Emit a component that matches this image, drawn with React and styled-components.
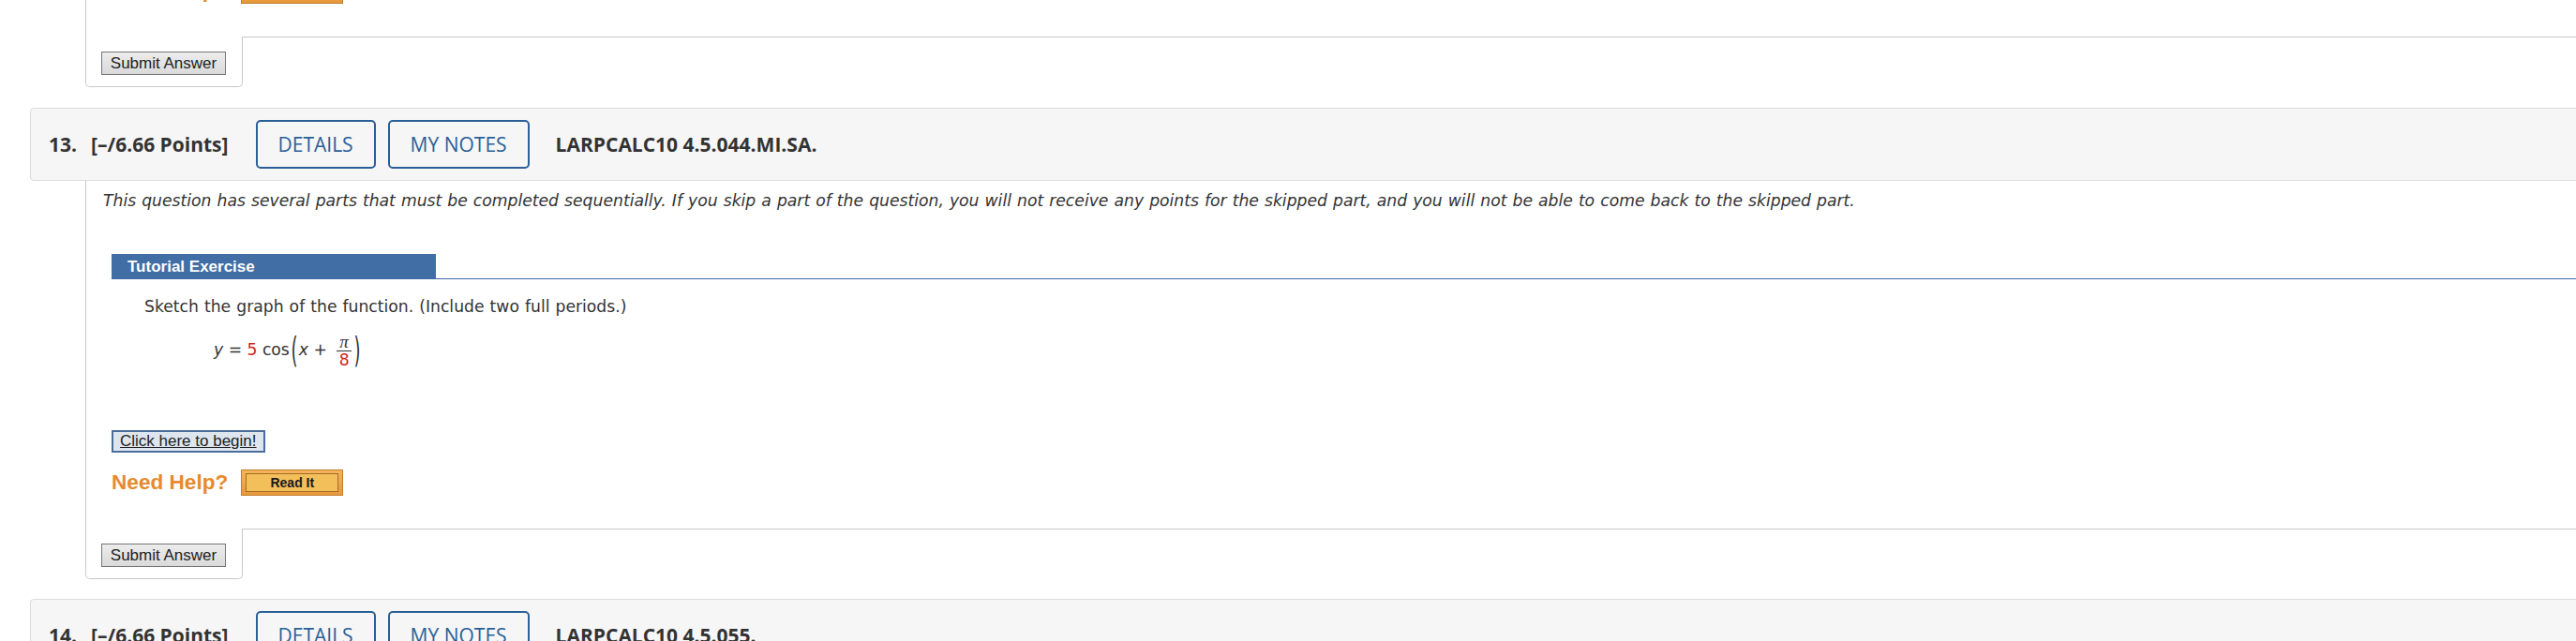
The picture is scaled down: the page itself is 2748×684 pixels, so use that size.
import React from 'react';
import styled, { createGlobalStyle } from 'styled-components';

const Global = createGlobalStyle`
  html, body { margin: 0; padding: 0; background: #fff; overflow: hidden; }
  #root { width: 2748px; height: 684px; }
`;

const Page = styled.div`
  width: 2748px;
  height: 684px;
  overflow: hidden;
  box-sizing: border-box;
  padding-left: 32px;
  display: flex;
  flex-direction: column;
`;

const Question = styled.section`
  margin-right: -40px;
  margin-top: ${p => p.$offset}px;
`;

const Header = styled.header`
  display: flex;
  align-items: center;
  box-sizing: border-box;
  height: 78px;
  padding-left: 19px;
  background: #f6f6f6;
  border: 1px solid #dcdcdc;
  border-radius: 4px;
  font-family: "Open Sans", sans-serif;
  color: #333;
`;

const HeadText = styled.span`
  font-weight: 700;
  font-size: 21px;
  margin-right: ${p => p.$gap}px;
  white-space: nowrap;
`;

const HeadButton = styled.button`
  height: 52px;
  box-sizing: border-box;
  padding: 0 22px;
  margin-right: ${p => p.$gap}px;
  background: transparent;
  border: 2px solid #2b5f97;
  border-radius: 5px;
  font-family: "Open Sans", sans-serif;
  font-weight: 500;
  font-size: 21px;
  color: #2b5f97;
  text-transform: uppercase;
`;

const Body = styled.div`
  margin-left: 59px;
`;

const Content = styled.div`
  border-left: 1px solid #cacaca;
  padding: ${p => p.$top}px 0 35px 18px;
`;

const Intro = styled.p`
  margin: 0;
  font-family: "DejaVu Sans", Verdana, sans-serif;
  font-style: italic;
  font-size: 17.2px;
  word-spacing: 0.6px;
  line-height: 20px;
  color: #333;
  white-space: nowrap;
`;

const Exercise = styled.div`
  margin: ${p => p.$top}px 0 0 9px;
`;

const TutorialHead = styled.div`
  border-bottom: 1px solid #3d6aa0;
`;

const TutorialTitle = styled.div`
  width: 346px;
  height: 26px;
  box-sizing: border-box;
  padding-left: 17px;
  background: #406ea5;
  color: #fff;
  font-family: "Liberation Sans", Arial, sans-serif;
  font-weight: 700;
  font-size: 17px;
  line-height: 27px;
`;

const Prompt = styled.div`
  margin: 19px 0 0 35px;
  font-family: "DejaVu Sans", Verdana, sans-serif;
  font-size: 17.2px;
  word-spacing: 0.6px;
  line-height: 20px;
  color: #333;
`;

const Formula = styled.div`
  display: flex;
  align-items: center;
  height: 40px;
  margin: 16px 0 0 74px;
  white-space: pre;
  word-spacing: 0;
`;

const Var = styled.span`
  font-style: italic;
`;

const Red = styled.span`
  color: #d2261c;
`;

const Paren = styled.span`
  display: inline-block;
  width: 10px;
  text-align: center;
  transform: scale(1.05, 2.2);
  font-family: "DejaVu Sans", sans-serif;
  color: #333;
`;

const Frac = styled.span`
  display: inline-flex;
  flex-direction: column;
  align-items: center;
  margin: 3px 1px 0 5px;
`;

const Num = styled.span`
  line-height: 17px;
  padding: 0 3px 1px;
  border-bottom: 1px solid #333;
  font-family: "Liberation Serif", serif;
  font-style: italic;
  font-size: 19px;
`;

const Den = styled.span`
  line-height: 18px;
  color: #d2261c;
`;

const BeginButton = styled.button`
  display: block;
  margin-top: 66px;
  height: 24px;
  box-sizing: border-box;
  padding: 0 7px;
  background: #dde6ef;
  border: 2px solid #4b6d9c;
  font-family: "Liberation Sans", Arial, sans-serif;
  font-size: 17px;
  line-height: 20px;
  color: #222;
  text-decoration: underline;
`;

const HelpRow = styled.div`
  display: flex;
  align-items: center;
  height: 28px;
  margin-top: ${p => p.$top}px;
`;

const NeedHelp = styled.span`
  font-family: "Liberation Sans", Arial, sans-serif;
  font-weight: 700;
  font-size: 22.6px;
  color: #e58a2e;
  margin-right: 14px;
`;

const ReadIt = styled.button`
  width: 109px;
  height: 28px;
  box-sizing: border-box;
  padding: 3px 4px;
  border: 1px solid #bf7e2c;
  background: linear-gradient(#f6b458, #e8983a);
  display: flex;
`;

const ReadItFace = styled.span`
  flex: 1;
  display: flex;
  align-items: center;
  justify-content: center;
  border: 1px solid #a36c2c;
  background: #f3bf5a;
  font-family: "Liberation Sans", Arial, sans-serif;
  font-weight: 700;
  font-size: 14px;
  color: #1a1a1a;
`;

const SubmitRow = styled.div`
  display: flex;
`;

const SubmitCell = styled.div`
  border: 1px solid #c9c9c9;
  border-top: none;
  border-radius: 0 0 5px 5px;
  padding: 16px 17px 12px 16px;
`;

const SubmitButton = styled.button`
  display: block;
  width: 133px;
  height: 25px;
  box-sizing: border-box;
  padding: 0;
  border: 1px solid #767676;
  background: linear-gradient(#ececec, #dadada);
  font-family: "Liberation Sans", Arial, sans-serif;
  font-size: 17px;
  color: #222;
`;

const SubmitFiller = styled.div`
  flex: 1;
  border-top: 1px solid #c9c9c9;
`;

function QuestionHeader({ num, code }) {
  return (
    <Header>
      <HeadText $gap={15}>{num}.</HeadText>
      <HeadText $gap={29}>[–/6.66 Points]</HeadText>
      <HeadButton $gap={13}>Details</HeadButton>
      <HeadButton $gap={28}>My Notes</HeadButton>
      <HeadText $gap={0}>{code}</HeadText>
    </Header>
  );
}

function Help({ top }) {
  return (
    <HelpRow $top={top}>
      <NeedHelp>Need Help?</NeedHelp>
      <ReadIt><ReadItFace>Read It</ReadItFace></ReadIt>
    </HelpRow>
  );
}

function Submit() {
  return (
    <SubmitRow>
      <SubmitCell><SubmitButton>Submit Answer</SubmitButton></SubmitCell>
      <SubmitFiller />
    </SubmitRow>
  );
}

export default function App() {
  return (
    <>
      <Global />
      <Page>
        <Question $offset={-24}>
          <Body>
            <Content $top={0}>
              <Exercise $top={0}>
                <Help top={0} />
              </Exercise>
            </Content>
            <Submit />
          </Body>
        </Question>

        <Question $offset={22}>
          <QuestionHeader num={13} code="LARPCALC10 4.5.044.MI.SA." />
          <Body>
            <Content $top={11}>
              <Intro>
                This question has several parts that must be completed sequentially. If you skip a part of the question, you will not receive any points for the skipped part, and you will not be able to come back to the skipped part.
              </Intro>
              <Exercise $top={47}>
                <TutorialHead>
                  <TutorialTitle>Tutorial Exercise</TutorialTitle>
                </TutorialHead>
                <Prompt>
                  Sketch the graph of the function. (Include two full periods.)
                  <Formula>
                    <Var>y</Var>{' = '}<Red>5</Red>{' cos'}
                    <Paren>(</Paren>
                    <Var>x</Var>{' + '}
                    <Frac>
                      <Num>π</Num>
                      <Den>8</Den>
                    </Frac>
                    <Paren>)</Paren>
                  </Formula>
                </Prompt>
                <BeginButton>Click here to begin!</BeginButton>
                <Help top={18} />
              </Exercise>
            </Content>
            <Submit />
          </Body>
        </Question>

        <Question $offset={21}>
          <QuestionHeader num={14} code="LARPCALC10 4.5.055." />
        </Question>
      </Page>
    </>
  );
}
